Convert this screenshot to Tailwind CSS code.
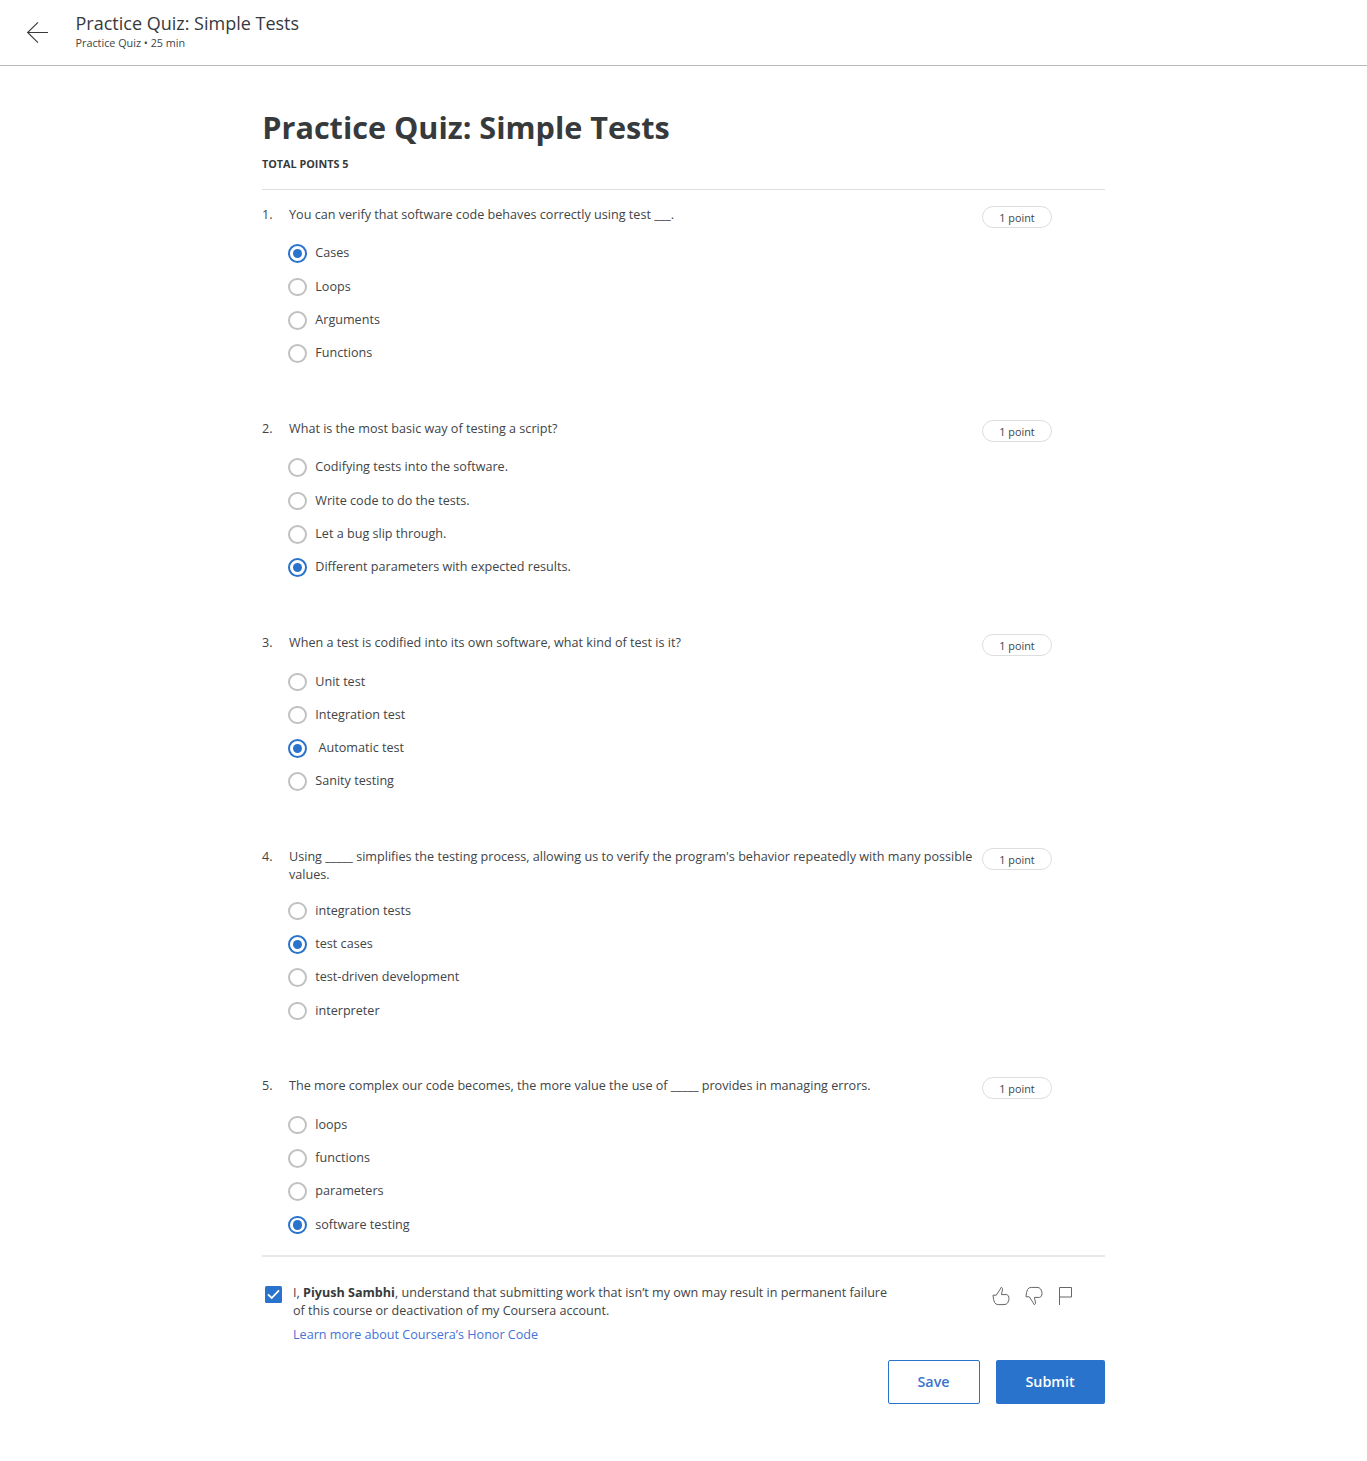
<!DOCTYPE html>
<html lang="en">
<head>
<meta charset="utf-8">
<title>Practice Quiz: Simple Tests</title>
<script src="https://cdn.jsdelivr.net/npm/@tailwindcss/browser@4"></script>
</head>
<body class="bg-white font-['Open_Sans',sans-serif] text-[12.6px] leading-[18px] text-[#414447]">
<header class="flex h-[66px] items-start border-b border-[#b9b9b9] pl-[26px]">
  <svg class="mt-[21px] h-[23px] w-[23px]" viewBox="0 0 23 23" fill="none" stroke="#373a3c" stroke-width="1.1"><path d="M22 11.5H1.5M12 1.3L1.6 11.5L12 21.7"/></svg>
  <div class="ml-[26.5px] pt-[11px]">
    <div class="text-[18px] leading-[24px] text-[#373a3c]">Practice Quiz: Simple Tests</div>
    <div class="text-[10.8px] leading-[15px]">Practice Quiz • 25 min</div>
  </div>
</header>
<main class="ml-[262px] w-[843px] text-[#414447]">
  <h1 class="pt-10 pl-[0.3px] text-[30.6px] leading-[42px] font-bold text-[#373a3c]">Practice Quiz: Simple Tests</h1>
  <div class="mt-2 text-[10.8px] leading-[16px] font-bold text-[#373a3c]">TOTAL POINTS 5</div>
  <div class="mt-[17px] h-px bg-[#dedede]"></div>
  <div id="questions" class="pt-[15.9px]"></div>
  <div class="h-[1.5px] bg-[#e8e8e8]"></div>
  <div class="flex items-start pt-[26.9px]">
    <svg class="mt-[2.1px] ml-[2.5px] h-[17px] w-[17px] shrink-0" viewBox="0 0 17 17"><rect width="17" height="17" rx="1.5" fill="#2a73cc"/><path d="M3 8.3L6.7 12L14 4.4" fill="none" stroke="#fff" stroke-width="1.8"/></svg>
    <div class="ml-[11.5px] w-[610px]">
      <p class="text-[12.58px]">I, <b class="text-[#373a3c]">Piyush Sambhi</b>, understand that submitting work that isn’t my own may result in permanent failure<br>of this course or deactivation of my Coursera account.</p>
      <a class="mt-[6.8px] block text-[#4573d5]">Learn more about Coursera’s Honor Code</a>
    </div>
    <div class="ml-[89px] flex items-start pt-[2px] text-[#66666b]">
      <svg class="h-[20px] w-[18px]" viewBox="0 0 18 20" fill="none" stroke="currentColor" stroke-width="1"><path d="M1 9.2H4.3L8.2 3.2Q8.6 1.2 9.6 1.4Q10.8 2 10.4 4L9.4 8.6H14.8Q17 9.2 17 12.3Q17 15 15.6 17Q14.4 18.6 12 18.6H6.2Q3.8 18.6 2.6 16.6Q1.2 13.8 1 9.2Z"/></svg>
      <svg class="ml-[15px] h-[20px] w-[18px]" viewBox="0 0 18 20" fill="none" stroke="currentColor" stroke-width="1"><path d="M1 10.8H4.3L8.2 16.8Q8.6 18.8 9.6 18.6Q10.8 18 10.4 16L9.4 11.4H14.8Q17 10.8 17 7.7Q17 5 15.6 3Q14.4 1.4 12 1.4H6.2Q3.8 1.4 2.6 3.4Q1.2 6.2 1 10.8Z"/></svg>
      <svg class="ml-[15px] h-[20px] w-[15px]" viewBox="0 0 15 20" fill="none" stroke="currentColor" stroke-width="1"><path d="M1.5 19V1.5H13.5V11H1.5"/></svg>
    </div>
  </div>
  <div class="mt-[15.2px] flex justify-end gap-4 text-[14.3px] font-semibold">
    <button class="h-[44px] w-[92px] rounded-[2px] border border-[#2a73cc] pr-px text-[#3a74cd]">Save</button>
    <button class="h-[44px] w-[109px] rounded-[2px] bg-[#2a73cc] pr-px text-white">Submit</button>
  </div>
</main>
<script>
const questions = [
  ["You can verify that software code behaves correctly using test ___.", ["Cases", "Loops", "Arguments", "Functions"], 0],
  ["What is the most basic way of testing a script?", ["Codifying tests into the software.", "Write code to do the tests.", "Let a bug slip through.", "Different parameters with expected results."], 3],
  ["When a test is codified into its own software, what kind of test is it?", ["Unit test", "Integration test", "\u00a0Automatic test", "Sanity testing"], 2],
  ["Using _____ simplifies the testing process, allowing us to verify the program's behavior repeatedly with many possible values.", ["integration tests", "test cases", "test-driven development", "interpreter"], 1],
  ["The more complex our code becomes, the more value the use of _____ provides in managing errors.", ["loops", "functions", "parameters", "software testing"], 3],
];
const on = '<span class="flex h-[18.6px] w-[18.6px] items-center justify-center rounded-full border-2 border-[#2a73cc]"><span class="h-[9.4px] w-[9.4px] rounded-full bg-[#2a73cc]"></span></span>';
const off = '<span class="h-[18.6px] w-[18.6px] rounded-full border-2 border-[#c1c1c1]"></span>';
document.getElementById("questions").innerHTML = questions.map(([text, options, picked], i) => `
  <section class="${i === 4 ? "h-[178.1px]" : i === 3 ? "h-[229px]" : "h-[214.1px]"}">
    <div class="flex items-start ${i === 3 ? "h-[53.5px]" : "h-[38.5px]"}">
      <span class="w-[27px] shrink-0">${i + 1}.</span>
      <p class="w-[693px] shrink-0 pr-[8px] text-[12.61px]">${text}</p>
      <span class="mt-[0.3px] flex h-[22px] w-[70px] items-center justify-center rounded-full border border-[#dedede] pt-[1.8px] text-[10.8px]">1 point</span>
    </div>
    ${options.map((o, j) => `<label class="flex h-[33.3px] items-start pl-[26px]">${j === picked ? on : off}<span class="ml-[8.7px]">${o}</span></label>`).join("")}
  </section>`).join("");
</script>
</body>
</html>
